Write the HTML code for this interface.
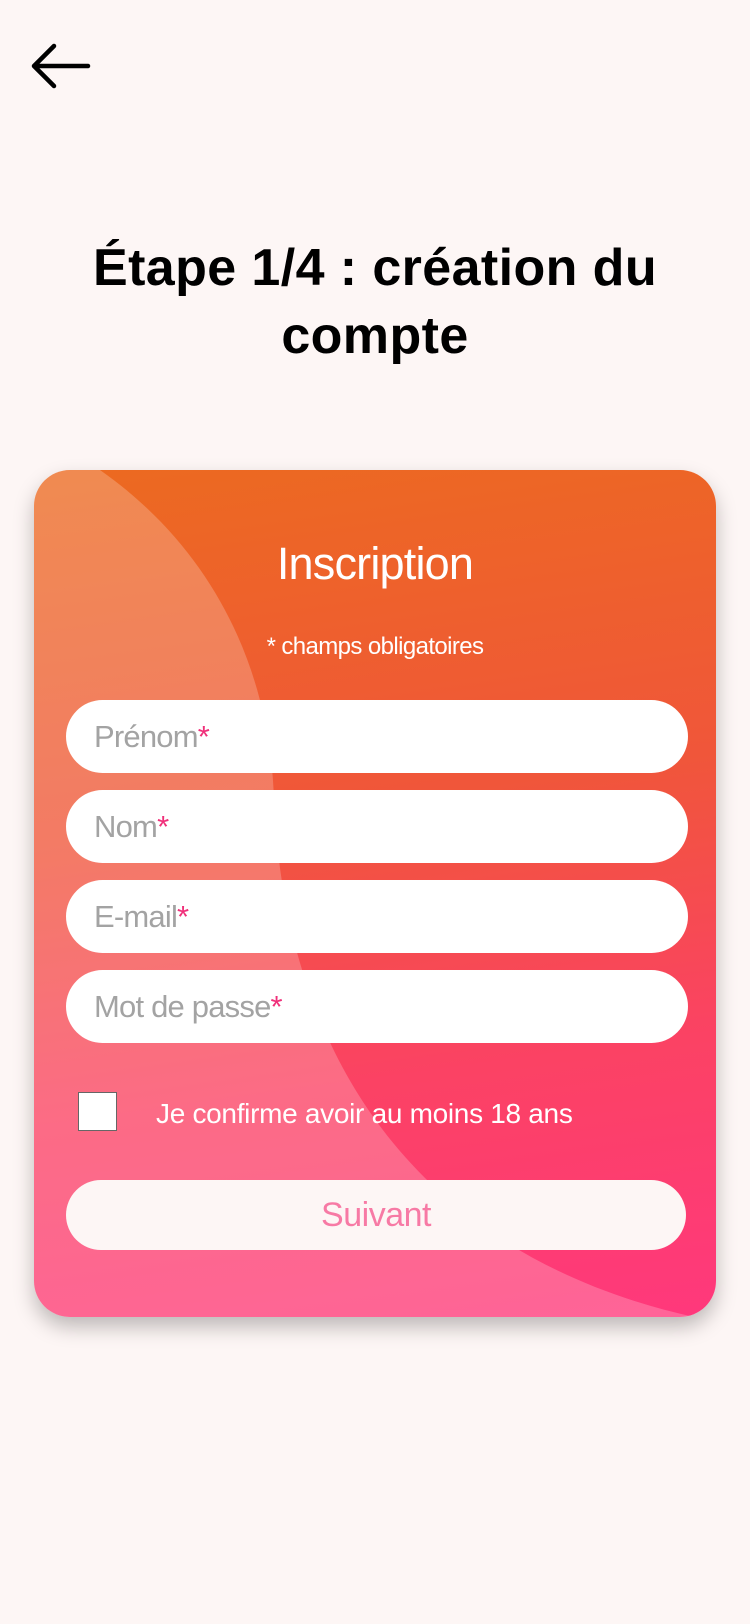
<!DOCTYPE html>
<html><head><meta charset="utf-8"><style>
body{margin:0;width:750px;height:1624px;background:#fdf6f5;font-family:"Liberation Sans",sans-serif;position:relative;overflow:hidden}
.t{position:absolute;left:0;width:750px;text-align:center;font-weight:bold;font-size:52px;letter-spacing:0.4px;color:#000;line-height:68px;top:234px}
.card{position:absolute;left:34px;top:470px;width:682px;height:847px;border-radius:36px;overflow:hidden;background:linear-gradient(172deg,#ec6a20 0%,#f0563a 40%,#fb4264 70%,#ff387c 100%);box-shadow:0 10px 20px rgba(0,0,0,.25)}
.card svg{position:absolute;left:0;top:0}
.h{position:absolute;left:0;width:682px;text-align:center;color:#fff}
.in{position:absolute;left:32px;width:622px;height:73px;background:#fff;border-radius:37px;font-size:31px;color:#a3a3a3;line-height:73px;box-sizing:border-box;padding-left:28px;letter-spacing:-0.8px}
.in b{font-weight:normal;color:#f0307a}
</style></head><body>
<svg style="position:absolute;left:28px;top:42px" width="66" height="48" viewBox="0 0 66 48"><path d="M60 24H7M26 4L6 24L26 44" fill="none" stroke="#000" stroke-width="4.5" stroke-linecap="round" stroke-linejoin="round"/></svg>
<div class="t">Étape 1/4 : création du<br>compte</div>
<div class="card">
<svg width="682" height="847"><path d="M0 0 L66 0 C180 80 236 200 240 330 C250 560 360 780 660 847 L0 847 Z" fill="#fff" fill-opacity="0.22"/></svg>
<div class="h" style="top:68px;font-size:45px;letter-spacing:-0.8px">Inscription</div>
<div class="h" style="top:163px;font-size:24px;letter-spacing:-0.6px">* champs obligatoires</div>
<div class="in" style="top:230px">Prénom<b>*</b></div>
<div class="in" style="top:320px">Nom<b>*</b></div>
<div class="in" style="top:410px">E-mail<b>*</b></div>
<div class="in" style="top:500px">Mot de passe<b>*</b></div>
<div style="position:absolute;left:44px;top:622px;width:37px;height:37px;background:#fff;border:1.5px solid #666"></div>
<div style="position:absolute;left:122px;top:628px;color:#fff;font-size:28px;letter-spacing:-0.3px">Je confirme avoir au moins 18 ans</div>
<div style="position:absolute;left:32px;top:710px;width:620px;height:70px;border-radius:35px;background:#fdf6f5;color:#f77aa5;font-size:34px;line-height:70px;text-align:center;letter-spacing:-0.5px">Suivant</div>
</div>
</body></html>
